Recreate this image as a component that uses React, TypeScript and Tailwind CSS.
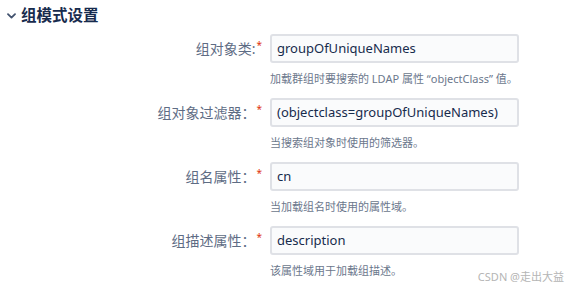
import React from "react";

type Field = {
  label: string;
  star: string;
  value: string;
  help: string;
};

const fields: Field[] = [
  { label: "组对象类:", star: "*", value: "groupOfUniqueNames", help: "加载群组时要搜索的 LDAP 属性 “objectClass” 值。" },
  { label: "组对象过滤器：", star: "*", value: "(objectclass=groupOfUniqueNames)", help: "当搜索组对象时使用的筛选器。" },
  { label: "组名属性：", star: "*", value: "cn", help: "当加载组名时使用的属性域。" },
  { label: "组描述属性：", star: "*", value: "description", help: "该属性域用于加载组描述。" },
];

const font = { fontFamily: '"Noto Sans", "Noto Sans CJK SC", sans-serif' };

function Chevron() {
  return (
    <svg width="9" height="6" viewBox="0 0 9 6" className="text-[#42526e]">
      <path d="M1 1.2 L4.5 4.6 L8 1.2" fill="none" stroke="currentColor" strokeWidth="1.8" strokeLinecap="round" strokeLinejoin="round" />
    </svg>
  );
}

export default function App() {
  return (
    <div className="relative h-[288px] w-[566px] overflow-hidden bg-white" style={font}>
      <div className="flex h-[34px] items-center gap-[5px] pl-[7px] pb-[2px]">
        <Chevron />
        <h3 className="text-[15.5px] font-semibold leading-none text-[#172b4d]">组模式设置</h3>
      </div>
      <div className="flex flex-col">
        {fields.map((f) => (
          <div key={f.label} className="flex h-[64px]">
            <div className="flex h-[29px] w-[262px] items-center justify-end text-[14px] text-[#5e6c84]">
              <span>{f.label}</span>
              <span className="-mt-[7px] ml-[1px] text-[10px] leading-none text-[#de350b]">{f.star}</span>
            </div>
            <div className="ml-[8px] flex flex-col">
              <div className="flex h-[29px] w-[249px] items-center rounded-[3px] border-2 border-[#dfe1e6] bg-[#fafbfc] pl-[5px] text-[13px] text-[#172b4d]">
                {f.value}
              </div>
              <div className="mt-[9px] text-[11px] leading-[14px] text-[#6b778c]">{f.help}</div>
            </div>
          </div>
        ))}
      </div>
      <div className="mt-[3px] flex h-[34px] items-center gap-[5px] pl-[7px] pb-[2px]">
        <Chevron />
        <h3 className="text-[15.5px] font-semibold leading-none text-[#172b4d]">成员模式设置</h3>
      </div>
      <div className="absolute right-[2px] bottom-[6px] text-[11px] leading-none text-[#b5b5b5]">CSDN @走出大益</div>
    </div>
  );
}
